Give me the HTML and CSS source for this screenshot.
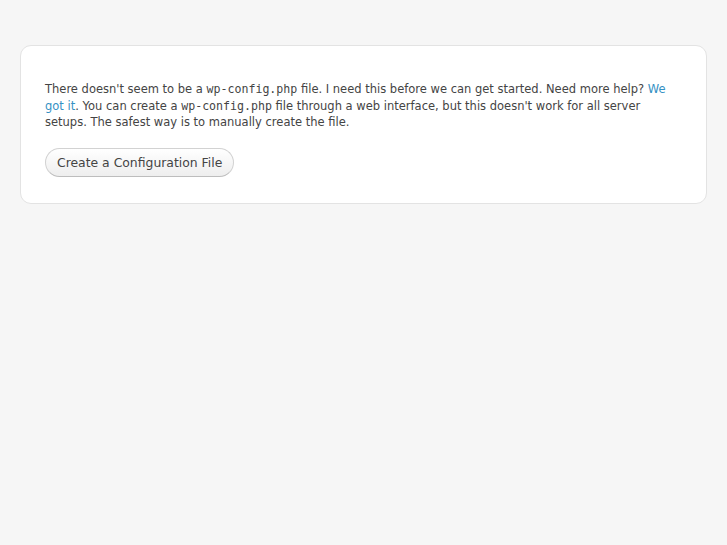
FILE: index.html
```html
<!DOCTYPE html>
<html>
<head>
<meta charset="utf-8">
<link rel="stylesheet" href="styles.css">
</head>
<body>
<div class="card">
  <p class="msg">There doesn't seem to be a <code>wp-config.php</code> file. I need this before we can get started. Need more help? <a href="#">We got it</a>. You can create a <code>wp-config.php</code> file through a web interface, but this doesn't work for all server setups. The safest way is to manually create the file.</p>
  <div class="step"><a href="#" class="button">Create a Configuration File</a></div>
</div>
</body>
</html>
```
FILE: styles.css
```css
html { background: #f6f6f6; }
body {
  margin: 0;
  padding: 45px 20px 0 20px;
  font-family: "DejaVu Sans", sans-serif;
  font-size: 11.5px;
  color: #444;
}
.card {
  background: #fff;
  border: 1px solid #e3e3e3;
  border-radius: 11px;
  padding: 35px 24px 26px 24px;
  width: 637px;
}
.msg {
  margin: 0;
  line-height: 16.5px;
}
code {
  font-family: "DejaVu Sans Mono", monospace;
  font-size: 11.6px;
}
a { color: #3591c4; text-decoration: none; }
.step { margin-top: 17px; display: flex; }
.button {
  display: inline-block;
  color: #444;
  font-size: 12.4px;
  line-height: 27px;
  padding: 0 11px;
  border: 1px solid #d2d2d2;
  border-bottom-color: #bdbdbd;
  border-radius: 15px;
  background: linear-gradient(#ffffff, #eeeeee);
}
```
